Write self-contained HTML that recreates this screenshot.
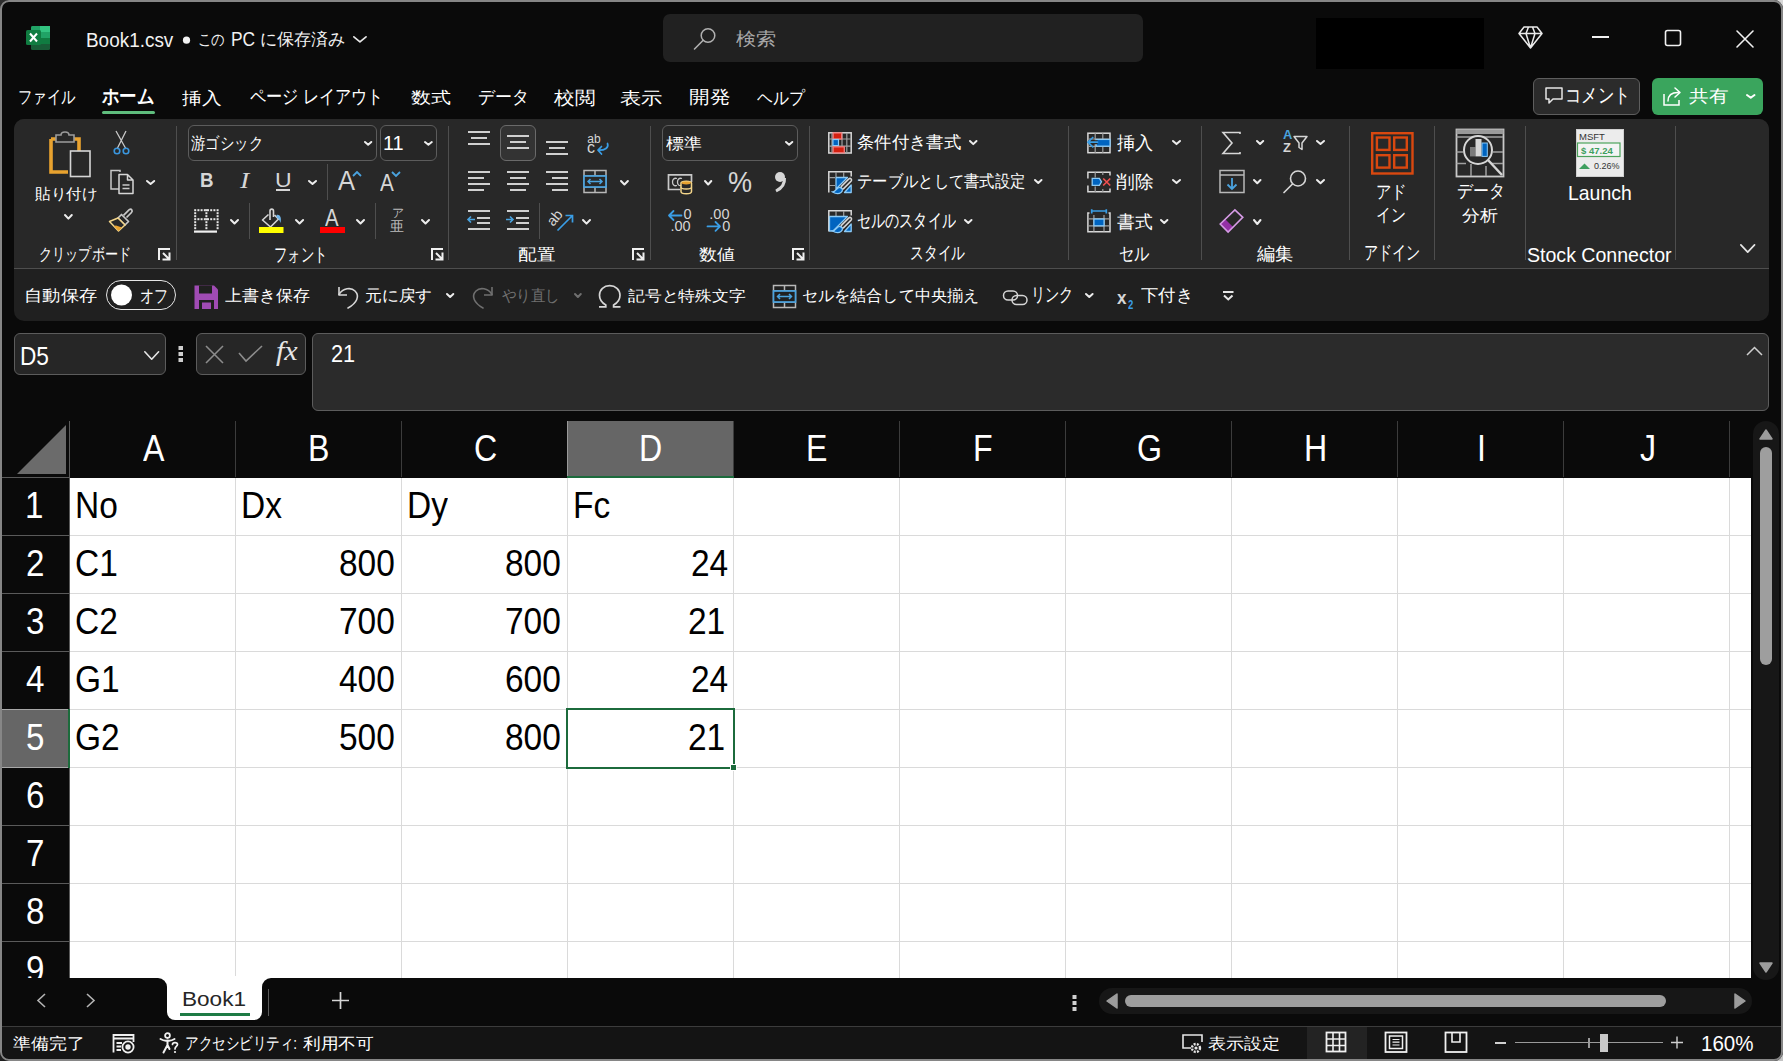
<!DOCTYPE html>
<html><head><meta charset="utf-8">
<style>
*{box-sizing:border-box;margin:0;padding:0}
html,body{width:1783px;height:1061px;overflow:hidden;background:#0a0a0a}
body{font-family:"Liberation Sans",sans-serif;color:#fff;position:relative}
.a{position:absolute}
.t{position:absolute;white-space:nowrap;line-height:1;transform-origin:0 0}
svg{position:absolute;overflow:visible}
</style></head><body>
<div class="a" style="left:0px;top:0px;width:12px;height:12px;background:#2e2e2e;"></div>
<div class="a" style="left:1771px;top:0px;width:12px;height:12px;background:#d8d8d8;"></div>
<div class="a" style="left:0px;top:1049px;width:12px;height:12px;background:#1e1e1e;"></div>
<div class="a" style="left:1771px;top:1049px;width:12px;height:12px;background:#c4c4c4;"></div>
<div class="a" style="left:0px;top:0px;width:1783px;height:1061px;background:#0a0a0a;border-radius:9px;"></div>
<svg style="left:26px;top:25px" width="25" height="26" viewBox="0 0 25 26"><rect x="5" y="1" width="19" height="24" rx="1.5" fill="#185c37"/><rect x="5" y="1" width="19" height="6" rx="1.5" fill="#21a366"/><rect x="14" y="1" width="10" height="6" fill="#33c481"/><rect x="5" y="7" width="19" height="6" fill="#21a366"/><rect x="5" y="13" width="19" height="6" fill="#107c41"/><rect x="0" y="5" width="15" height="15" rx="1.5" fill="#107c41"/><path d="M4 8.5 L11 16.5 M11 8.5 L4 16.5" stroke="#fff" stroke-width="2"/></svg>
<svg style="left:350.6px;top:33.5px" width="17.899999999999977" height="10.799999999999997"><polyline points="2.85,2.85 8.949999999999989,7.9499999999999975 15.049999999999978,2.85" fill="none" stroke="#e8e8e8" stroke-width="1.7" stroke-linecap="round" stroke-linejoin="round"/></svg>
<svg style="left:182px;top:36px" width="9" height="9" viewBox="0 0 9 9"><circle cx="4.5" cy="4.2" r="3.6" fill="#f2f2f2"/></svg>
<div class="a" style="left:663px;top:14px;width:480px;height:48px;background:#212121;border-radius:7px;"></div>
<svg style="left:693px;top:27px" width="25" height="23" viewBox="0 0 25 23"><circle cx="15" cy="8.5" r="6.8" fill="none" stroke="#b0b0b0" stroke-width="1.5"/><line x1="10.2" y1="13.3" x2="1.5" y2="22" stroke="#b0b0b0" stroke-width="1.6" stroke-linecap="round"/></svg>
<div class="a" style="left:1316px;top:18px;width:168px;height:51px;background:#000;"></div>
<svg style="left:1517px;top:25px" width="27" height="25" viewBox="0 0 27 25"><path d="M7 2 H20 L25 8.5 L13.5 23 L2 8.5 Z M2 8.5 H25 M13.5 23 L9 8.5 L11.5 2 M13.5 23 L18 8.5 L15.5 2" fill="none" stroke="#eaeaea" stroke-width="1.5" stroke-linejoin="round"/></svg>
<div class="a" style="left:1592px;top:36px;width:17px;height:2px;background:#f0f0f0;"></div>
<svg style="left:1664px;top:29px" width="18" height="18" viewBox="0 0 18 18"><rect x="1.5" y="1.5" width="15" height="15" rx="2" fill="none" stroke="#f0f0f0" stroke-width="1.6"/></svg>
<svg style="left:1735px;top:29px" width="20" height="20" viewBox="0 0 20 20"><path d="M2 2 L18 18 M18 2 L2 18" stroke="#f0f0f0" stroke-width="1.6" stroke-linecap="round"/></svg>
<div class="a" style="left:102px;top:111px;width:53px;height:3px;background:#5fbd7d;border-radius:2px;"></div>
<div class="a" style="left:1533px;top:78px;width:107px;height:37px;background:#2b2b2b;border:1px solid #5e5e5e;border-radius:6px;"></div>
<svg style="left:1544px;top:86px" width="20" height="20" viewBox="0 0 20 20"><path d="M2 2 H18 V13 H9 L5 17 V13 H2 Z" fill="none" stroke="#e6e6e6" stroke-width="1.5" stroke-linejoin="round"/></svg>
<div class="a" style="left:1652px;top:78px;width:111px;height:37px;background:#3aa55d;border-radius:6px;"></div>
<svg style="left:1662px;top:86px" width="22" height="21" viewBox="0 0 22 21"><path d="M2 8 V19 H17 V14" fill="none" stroke="#fff" stroke-width="1.5"/><path d="M6 15 C6 9 10 6.5 16 6.5 M13 2 L18 6.5 L13 11" fill="none" stroke="#fff" stroke-width="1.5" stroke-linejoin="round" stroke-linecap="round"/></svg>
<svg style="left:1743.5px;top:92.2px" width="13.5" height="8.799999999999997"><polyline points="3.0,3.0 6.75,5.799999999999997 10.5,3.0" fill="none" stroke="#fff" stroke-width="2.0" stroke-linecap="round" stroke-linejoin="round"/></svg>
<div class="a" style="left:14px;top:119px;width:1755px;height:202px;border-radius:10px;background:#202020;overflow:hidden"><div class="a" style="left:0;top:0;width:1755px;height:149px;background:#282828"></div><div class="a" style="left:0;top:149px;width:1755px;height:1px;background:#4e4e4e"></div></div>
<div class="a" style="left:176px;top:126px;width:1px;height:134px;background:#4e4e4e;"></div>
<div class="a" style="left:448px;top:126px;width:1px;height:134px;background:#4e4e4e;"></div>
<div class="a" style="left:650px;top:126px;width:1px;height:134px;background:#4e4e4e;"></div>
<div class="a" style="left:809px;top:126px;width:1px;height:134px;background:#4e4e4e;"></div>
<div class="a" style="left:1068px;top:126px;width:1px;height:134px;background:#4e4e4e;"></div>
<div class="a" style="left:1201px;top:126px;width:1px;height:134px;background:#4e4e4e;"></div>
<div class="a" style="left:1349px;top:126px;width:1px;height:134px;background:#4e4e4e;"></div>
<div class="a" style="left:1434px;top:126px;width:1px;height:134px;background:#4e4e4e;"></div>
<div class="a" style="left:1525px;top:126px;width:1px;height:134px;background:#4e4e4e;"></div>
<div class="a" style="left:1675px;top:126px;width:1px;height:134px;background:#4e4e4e;"></div>
<div class="a" style="left:327px;top:164px;width:1px;height:36px;background:#4e4e4e;"></div>
<div class="a" style="left:249px;top:203px;width:1px;height:36px;background:#4e4e4e;"></div>
<div class="a" style="left:375px;top:203px;width:1px;height:36px;background:#4e4e4e;"></div>
<div class="a" style="left:539px;top:203px;width:1px;height:36px;background:#4e4e4e;"></div>
<svg style="left:157px;top:247px" width="15" height="15" viewBox="0 0 15 15"><path d="M2 13 V2 H13" fill="none" stroke="#f0f0f0" stroke-width="2"/><path d="M6 6 L12 12 M12.5 5.5 V12.5 H5.5" fill="none" stroke="#f0f0f0" stroke-width="2"/></svg>
<svg style="left:430px;top:247px" width="15" height="15" viewBox="0 0 15 15"><path d="M2 13 V2 H13" fill="none" stroke="#f0f0f0" stroke-width="2"/><path d="M6 6 L12 12 M12.5 5.5 V12.5 H5.5" fill="none" stroke="#f0f0f0" stroke-width="2"/></svg>
<svg style="left:631px;top:247px" width="15" height="15" viewBox="0 0 15 15"><path d="M2 13 V2 H13" fill="none" stroke="#f0f0f0" stroke-width="2"/><path d="M6 6 L12 12 M12.5 5.5 V12.5 H5.5" fill="none" stroke="#f0f0f0" stroke-width="2"/></svg>
<svg style="left:791px;top:247px" width="15" height="15" viewBox="0 0 15 15"><path d="M2 13 V2 H13" fill="none" stroke="#f0f0f0" stroke-width="2"/><path d="M6 6 L12 12 M12.5 5.5 V12.5 H5.5" fill="none" stroke="#f0f0f0" stroke-width="2"/></svg>
<svg style="left:46px;top:130px" width="48" height="50" viewBox="0 0 48 50"><path d="M5 9 H10 M26 9 H33 V22 M5 9 V42 H22" fill="none" stroke="#e8a22f" stroke-width="3.6"/><path d="M10 12 V5 H15 C15 1 23 1 23 5 H28 V12 Z" fill="#282828" stroke="#9c9c9c" stroke-width="1.6"/><rect x="24.5" y="21" width="19.5" height="25.5" fill="#282828" stroke="#d6d6d6" stroke-width="1.6"/></svg>
<svg style="left:61.8px;top:212px" width="12.799999999999997" height="9.599999999999994"><polyline points="3.0,3.0 6.399999999999999,6.599999999999994 9.799999999999997,3.0" fill="none" stroke="#ededed" stroke-width="2.0" stroke-linecap="round" stroke-linejoin="round"/></svg>
<svg style="left:112px;top:130px" width="20" height="26" viewBox="0 0 20 26"><path d="M4 1 L14 19 M14 1 L5 19" stroke="#c8c8c8" stroke-width="1.3" fill="none"/><circle cx="5" cy="21" r="2.8" fill="none" stroke="#3a96dd" stroke-width="1.6"/><circle cx="14" cy="21" r="2.8" fill="none" stroke="#3a96dd" stroke-width="1.6"/></svg>
<svg style="left:108px;top:169px" width="28" height="27" viewBox="0 0 28 27"><path d="M12 3 V1.5 H3 V20 H11" fill="none" stroke="#c8c8c8" stroke-width="1.5"/><path d="M11 5.5 H19.5 L25 11 V24.5 H11 Z M19.5 5.5 V11 H25" fill="#282828" stroke="#d6d6d6" stroke-width="1.5" stroke-linejoin="round"/><path d="M14.5 16 H21.5 M14.5 19.5 H21.5" stroke="#c8c8c8" stroke-width="1.3"/></svg>
<svg style="left:143.8px;top:178px" width="13.199999999999989" height="9"><polyline points="3.0,3.0 6.599999999999994,6.0 10.199999999999989,3.0" fill="none" stroke="#ededed" stroke-width="2.0" stroke-linecap="round" stroke-linejoin="round"/></svg>
<svg style="left:108px;top:207px" width="28" height="27" viewBox="0 0 28 27"><path d="M18.5 10.5 L23.5 5.5 C25 4 23.5 1.5 21.5 2.5 C21 2.8 20.8 3 20.5 3.3 L15.5 8.3" fill="none" stroke="#c8c8c8" stroke-width="1.7" stroke-linejoin="round"/><path d="M13.5 7.5 L20.5 14.5 L17 18 L10 11 Z" fill="#282828" stroke="#c8c8c8" stroke-width="1.7" stroke-linejoin="round"/><path d="M10 11 L1.5 14.5 L10.5 24 L17 18 Z" fill="#282828" stroke="#f3d58a" stroke-width="1.5" stroke-linejoin="round"/><path d="M6 19 L10.5 24 L14 20.5 L8 18.5 Z" fill="#e8a22f"/></svg>
<div class="a" style="left:188px;top:125px;width:189px;height:36px;background:#262626;border:1px solid #5c5c5c;border-radius:6px;"></div>
<div class="a" style="left:380px;top:125px;width:57px;height:36px;background:#262626;border:1px solid #5c5c5c;border-radius:6px;"></div>
<svg style="left:362px;top:139px" width="12.300000000000011" height="8.699999999999989"><polyline points="3.0,3.0 6.150000000000006,5.699999999999989 9.300000000000011,3.0" fill="none" stroke="#ededed" stroke-width="2.0" stroke-linecap="round" stroke-linejoin="round"/></svg>
<svg style="left:421.8px;top:139px" width="12.800000000000011" height="8.699999999999989"><polyline points="3.0,3.0 6.400000000000006,5.699999999999989 9.800000000000011,3.0" fill="none" stroke="#ededed" stroke-width="2.0" stroke-linecap="round" stroke-linejoin="round"/></svg>
<div class="a" style="left:276px;top:189px;width:14px;height:2px;background:#d6d6d6;"></div>
<svg style="left:306px;top:178px" width="13" height="9"><polyline points="3.0,3.0 6.5,6.0 10.0,3.0" fill="none" stroke="#ededed" stroke-width="2.0" stroke-linecap="round" stroke-linejoin="round"/></svg>
<svg style="left:351px;top:169px" width="12" height="9" viewBox="0 0 12 9"><polyline points="2,7 6,3 10,7" fill="none" stroke="#4aa3df" stroke-width="1.8"/></svg>
<svg style="left:390px;top:169px" width="12" height="9" viewBox="0 0 12 9"><polyline points="2,3 6,7 10,3" fill="none" stroke="#4aa3df" stroke-width="1.8"/></svg>
<svg style="left:192px;top:207px" width="27" height="28" viewBox="0 0 27 28"><rect x="2.2" y="2.2" width="2" height="2" fill="#e6e6e6"/><rect x="2.2" y="5.2" width="2" height="2" fill="#e6e6e6"/><rect x="2.2" y="8.2" width="2" height="2" fill="#e6e6e6"/><rect x="2.2" y="11.2" width="2" height="2" fill="#e6e6e6"/><rect x="2.2" y="14.2" width="2" height="2" fill="#e6e6e6"/><rect x="2.2" y="17.2" width="2" height="2" fill="#e6e6e6"/><rect x="2.2" y="20.2" width="2" height="2" fill="#e6e6e6"/><rect x="5.4" y="2.2" width="2" height="2" fill="#e6e6e6"/><rect x="5.4" y="11.2" width="2" height="2" fill="#e6e6e6"/><rect x="8.6" y="2.2" width="2" height="2" fill="#e6e6e6"/><rect x="8.6" y="11.2" width="2" height="2" fill="#e6e6e6"/><rect x="11.8" y="2.2" width="2" height="2" fill="#e6e6e6"/><rect x="11.8" y="11.2" width="2" height="2" fill="#e6e6e6"/><rect x="13.4" y="2.2" width="2" height="2" fill="#e6e6e6"/><rect x="13.4" y="5.2" width="2" height="2" fill="#e6e6e6"/><rect x="13.4" y="8.2" width="2" height="2" fill="#e6e6e6"/><rect x="13.4" y="11.2" width="2" height="2" fill="#e6e6e6"/><rect x="13.4" y="14.2" width="2" height="2" fill="#e6e6e6"/><rect x="13.4" y="17.2" width="2" height="2" fill="#e6e6e6"/><rect x="13.4" y="20.2" width="2" height="2" fill="#e6e6e6"/><rect x="15.0" y="2.2" width="2" height="2" fill="#e6e6e6"/><rect x="15.0" y="11.2" width="2" height="2" fill="#e6e6e6"/><rect x="18.2" y="2.2" width="2" height="2" fill="#e6e6e6"/><rect x="18.2" y="11.2" width="2" height="2" fill="#e6e6e6"/><rect x="21.4" y="2.2" width="2" height="2" fill="#e6e6e6"/><rect x="21.4" y="11.2" width="2" height="2" fill="#e6e6e6"/><rect x="24.6" y="2.2" width="2" height="2" fill="#e6e6e6"/><rect x="24.6" y="5.2" width="2" height="2" fill="#e6e6e6"/><rect x="24.6" y="8.2" width="2" height="2" fill="#e6e6e6"/><rect x="24.6" y="11.2" width="2" height="2" fill="#e6e6e6"/><rect x="24.6" y="14.2" width="2" height="2" fill="#e6e6e6"/><rect x="24.6" y="17.2" width="2" height="2" fill="#e6e6e6"/><rect x="24.6" y="20.2" width="2" height="2" fill="#e6e6e6"/><rect x="2" y="23.5" width="23" height="2.2" fill="#f0f0f0"/></svg>
<svg style="left:228px;top:217px" width="13" height="9.5"><polyline points="3.0,3.0 6.5,6.5 10.0,3.0" fill="none" stroke="#ededed" stroke-width="2.0" stroke-linecap="round" stroke-linejoin="round"/></svg>
<svg style="left:259px;top:207px" width="28" height="27" viewBox="0 0 28 27"><path d="M9.5 7.5 L3.5 13 L11.5 20 L19.5 12 L15.5 8" fill="none" stroke="#d6d6d6" stroke-width="1.6" stroke-linejoin="round"/><path d="M11 13 V4 C11 1.5 14.5 1.5 14.5 4 V10" fill="none" stroke="#d6d6d6" stroke-width="1.6"/><path d="M17.5 8 C20.5 7 23 10 21.5 16 C20.5 13 19.5 11.5 17.5 10.5 Z" fill="#6fb5ea"/><rect x="0" y="20" width="24.5" height="6" fill="#ffff00"/></svg>
<svg style="left:292.8px;top:217px" width="13.099999999999966" height="9.5"><polyline points="3.0,3.0 6.549999999999983,6.5 10.099999999999966,3.0" fill="none" stroke="#ededed" stroke-width="2.0" stroke-linecap="round" stroke-linejoin="round"/></svg>
<div class="a" style="left:320px;top:227px;width:24.5px;height:6px;background:#ff0000;"></div>
<svg style="left:353.7px;top:217px" width="13.0" height="9.5"><polyline points="3.0,3.0 6.5,6.5 10.0,3.0" fill="none" stroke="#ededed" stroke-width="2.0" stroke-linecap="round" stroke-linejoin="round"/></svg>
<div class="t" style="left:392px;top:207px;font-size:12px;color:#bdbdbd;">ア</div>
<div class="t" style="left:390px;top:219px;font-size:14px;color:#bdbdbd;">亜</div>
<svg style="left:418.8px;top:217px" width="13.0" height="9.5"><polyline points="3.0,3.0 6.5,6.5 10.0,3.0" fill="none" stroke="#ededed" stroke-width="2.0" stroke-linecap="round" stroke-linejoin="round"/></svg>
<div class="a" style="left:500px;top:125px;width:36px;height:36px;background:#333333;border:1px solid #6a6a6a;border-radius:6px;"></div>
<svg style="left:468px;top:0px" width="40" height="300" viewBox="0 0 40 300"><rect x="0" y="131" width="22" height="2" fill="#d0d0d0"/><rect x="3" y="137" width="16" height="2" fill="#d0d0d0"/><rect x="0" y="143" width="22" height="2" fill="#d0d0d0"/></svg>
<svg style="left:507px;top:0px" width="40" height="300" viewBox="0 0 40 300"><rect x="0" y="135" width="22" height="2" fill="#d0d0d0"/><rect x="3" y="141" width="16" height="2" fill="#d0d0d0"/><rect x="0" y="147" width="22" height="2" fill="#d0d0d0"/></svg>
<svg style="left:546px;top:0px" width="40" height="300" viewBox="0 0 40 300"><rect x="0" y="141" width="22" height="2" fill="#d0d0d0"/><rect x="3" y="147" width="16" height="2" fill="#d0d0d0"/><rect x="0" y="153" width="22" height="2" fill="#d0d0d0"/></svg>
<svg style="left:468px;top:0px" width="40" height="300" viewBox="0 0 40 300"><rect x="0" y="171" width="22" height="2" fill="#d0d0d0"/><rect x="0" y="177" width="16" height="2" fill="#d0d0d0"/><rect x="0" y="183" width="22" height="2" fill="#d0d0d0"/><rect x="0" y="189" width="16" height="2" fill="#d0d0d0"/></svg>
<svg style="left:507px;top:0px" width="40" height="300" viewBox="0 0 40 300"><rect x="0" y="171" width="22" height="2" fill="#d0d0d0"/><rect x="3" y="177" width="16" height="2" fill="#d0d0d0"/><rect x="0" y="183" width="22" height="2" fill="#d0d0d0"/><rect x="3" y="189" width="16" height="2" fill="#d0d0d0"/></svg>
<svg style="left:546px;top:0px" width="40" height="300" viewBox="0 0 40 300"><rect x="0" y="171" width="22" height="2" fill="#d0d0d0"/><rect x="6" y="177" width="16" height="2" fill="#d0d0d0"/><rect x="0" y="183" width="22" height="2" fill="#d0d0d0"/><rect x="6" y="189" width="16" height="2" fill="#d0d0d0"/></svg>
<div class="t" style="left:587.3px;top:132.8px;font-size:12px;color:#d6d6d6;">ab</div>
<div class="t" style="left:587px;top:139.9px;font-size:16px;color:#d6d6d6;">c</div>
<svg style="left:595px;top:141px" width="16" height="16" viewBox="0 0 16 16"><path d="M12.5 2.5 C14 6.5 10 9.5 3.5 9.2 M6.5 5.5 L3 9.2 L6.5 13" fill="none" stroke="#3a9ee6" stroke-width="1.7" stroke-linejoin="round" stroke-linecap="round"/></svg>
<svg style="left:582px;top:169px" width="27" height="26" viewBox="0 0 27 26"><rect x="2" y="1.5" width="22" height="22" fill="none" stroke="#b8b8b8" stroke-width="1.5"/><path d="M2 7 H24 M2 18 H24 M13 1.5 V7 M13 18 V23.5" stroke="#b8b8b8" stroke-width="1.5"/><rect x="2" y="7" width="22" height="11" fill="#282828" stroke="#4aa3df" stroke-width="1.7"/><path d="M6 12.5 H20 M8.5 10 L6 12.5 L8.5 15 M17.5 10 L20 12.5 L17.5 15" fill="none" stroke="#4aa3df" stroke-width="1.5"/></svg>
<svg style="left:617.5px;top:177.5px" width="12.899999999999977" height="9.5"><polyline points="3.0,3.0 6.449999999999989,6.5 9.899999999999977,3.0" fill="none" stroke="#ededed" stroke-width="2.0" stroke-linecap="round" stroke-linejoin="round"/></svg>
<svg style="left:468px;top:0px" width="40" height="300" viewBox="0 0 40 300"><rect x="0" y="210" width="22" height="2" fill="#d0d0d0"/><rect x="9" y="217" width="13" height="2" fill="#d0d0d0"/><rect x="9" y="222" width="13" height="2" fill="#d0d0d0"/><rect x="0" y="228" width="22" height="2" fill="#d0d0d0"/></svg>
<svg style="left:507px;top:0px" width="40" height="300" viewBox="0 0 40 300"><rect x="0" y="210" width="22" height="2" fill="#d0d0d0"/><rect x="9" y="217" width="13" height="2" fill="#d0d0d0"/><rect x="9" y="222" width="13" height="2" fill="#d0d0d0"/><rect x="0" y="228" width="22" height="2" fill="#d0d0d0"/></svg>
<svg style="left:466px;top:211px" width="12" height="14" viewBox="0 0 12 14"><path d="M9 8.5 H2 M5 5.5 L2 8.5 L5 11.5" fill="none" stroke="#4aa3df" stroke-width="1.6"/></svg>
<svg style="left:505px;top:211px" width="12" height="14" viewBox="0 0 12 14"><path d="M1 8.5 H8 M5 5.5 L8 8.5 L5 11.5" fill="none" stroke="#4aa3df" stroke-width="1.6"/></svg>
<div class="t" style="left:548px;top:210px;font-size:14.5px;color:#d6d6d6;transform:rotate(-50deg);transform-origin:8px 9px;">ab</div>
<svg style="left:555px;top:212px" width="20" height="21" viewBox="0 0 20 21"><path d="M2.5 18.5 L17 4 M10.5 3.5 H17.5 V10.5" fill="none" stroke="#3a9ee6" stroke-width="1.7"/></svg>
<svg style="left:579.8px;top:216.8px" width="13.0" height="9.599999999999994"><polyline points="3.0,3.0 6.5,6.599999999999994 10.0,3.0" fill="none" stroke="#ededed" stroke-width="2.0" stroke-linecap="round" stroke-linejoin="round"/></svg>
<div class="a" style="left:662px;top:125px;width:136px;height:36px;background:#262626;border:1px solid #5c5c5c;border-radius:6px;"></div>
<svg style="left:783px;top:139px" width="12.299999999999955" height="8.699999999999989"><polyline points="3.0,3.0 6.149999999999977,5.699999999999989 9.299999999999955,3.0" fill="none" stroke="#ededed" stroke-width="2.0" stroke-linecap="round" stroke-linejoin="round"/></svg>
<svg style="left:666px;top:172px" width="28" height="24" viewBox="0 0 28 24"><path d="M14 17.5 H2.5 V2.8 H25.5 V10" fill="none" stroke="#c8c8c8" stroke-width="1.7"/><path d="M11 6.5 C8 5.5 6.5 7.5 6.5 10 C6.5 12.5 8 14.5 11 13.5 M16 6.5 C13 5.5 11.5 7.5 11.5 10 C11.5 12.5 13 14 15 13.5" fill="none" stroke="#c8c8c8" stroke-width="1.3"/><path d="M15 11 C15 8.5 25.5 8.5 25.5 11 V19.5 C25.5 22.5 15 22.5 15 19.5 Z" fill="#282828" stroke="#f3d58a" stroke-width="1.5"/><ellipse cx="20.25" cy="11" rx="4.6" ry="1.4" fill="#e8a22f"/><path d="M15 15.3 C15 17.5 25.5 17.5 25.5 15.3" fill="none" stroke="#f3d58a" stroke-width="1.4"/></svg>
<svg style="left:702.3px;top:177.5px" width="12.300000000000068" height="9.5"><polyline points="3.0,3.0 6.150000000000034,6.5 9.300000000000068,3.0" fill="none" stroke="#ededed" stroke-width="2.0" stroke-linecap="round" stroke-linejoin="round"/></svg>
<svg style="left:772px;top:171px" width="16" height="22" viewBox="0 0 16 22"><circle cx="8" cy="6" r="5" fill="#d6d6d6"/><path d="M12.5 7 C13 13 10 17 4 20" fill="none" stroke="#d6d6d6" stroke-width="3"/></svg>
<div class="t" style="left:683.4px;top:207.1px;font-size:14.5px;color:#d6d6d6;">0</div>
<div class="t" style="left:670.5px;top:219.1px;font-size:14.5px;color:#d6d6d6;">.00</div>
<svg style="left:666px;top:209px" width="18" height="14" viewBox="0 0 18 14"><path d="M15.5 6.5 H3 M7.5 2 L3 6.5 L7.5 11" fill="none" stroke="#3a9ee6" stroke-width="1.8" stroke-linecap="round" stroke-linejoin="round"/></svg>
<div class="t" style="left:709.3px;top:207.1px;font-size:14.5px;color:#d6d6d6;">.00</div>
<div class="t" style="left:722.2px;top:219.1px;font-size:14.5px;color:#d6d6d6;">0</div>
<svg style="left:705px;top:220px" width="18" height="14" viewBox="0 0 18 14"><path d="M2.5 6.4 H15 M10.5 2 L15 6.4 L10.5 10.8" fill="none" stroke="#3a9ee6" stroke-width="1.8" stroke-linecap="round" stroke-linejoin="round"/></svg>
<svg style="left:825px;top:128px" width="30" height="30" viewBox="0 0 30 30"><rect x="3.8" y="4.8" width="22.4" height="20.2" fill="none" stroke="#d8d8d8" stroke-width="1.5"/><path d="M7 5 V25 M17 5 V25 M21.8 5 V25 M4 11 H26 M4 18.1 H26" stroke="#a0a0a0" stroke-width="1.2"/><rect x="8.1" y="4.9" width="8.6" height="6.1" fill="#d42010" stroke="#f08080" stroke-width="1.3"/><rect x="7.9" y="11.5" width="5.6" height="6.1" fill="#0064c0" stroke="#8ccaf5" stroke-width="1.2"/><rect x="8.1" y="18.8" width="11.2" height="6" fill="#d42010" stroke="#f08080" stroke-width="1.3"/></svg>
<svg style="left:967px;top:137.7px" width="12.5" height="9.100000000000023"><polyline points="3.0,3.0 6.25,6.100000000000023 9.5,3.0" fill="none" stroke="#ededed" stroke-width="2.0" stroke-linecap="round" stroke-linejoin="round"/></svg>
<svg style="left:825px;top:167px" width="30" height="30" viewBox="0 0 30 30"><path d="M3.8 25.5 V4.8 H26.2 V9.5" fill="none" stroke="#d8d8d8" stroke-width="1.5"/><path d="M11 5 V10 M18.7 5 V10 M4 10.7 H10 M4 18.5 H10" stroke="#a0a0a0" stroke-width="1.2"/><path d="M11 10.5 H22.5 L11 22 Z" fill="#0064c0" stroke="#8ccaf5" stroke-width="1.3" stroke-linejoin="round"/><path d="M26.2 18 V25.5 H19.5 Z" fill="#0064c0" stroke="#8ccaf5" stroke-width="1.3" stroke-linejoin="round"/><path d="M25 13 L17.5 20.5" stroke="#d6d6d6" stroke-width="4.6" stroke-linecap="round"/><path d="M25 13 L17.5 20.5" stroke="#282828" stroke-width="1.6" stroke-linecap="round"/><path d="M7.5 25 C11 24.5 12 20 15 20.5 C17.5 21 18.5 23.5 16 25.5 C13.5 27.5 10 26.5 7.5 25 Z" fill="#0064c0" stroke="#8ccaf5" stroke-width="1.3"/></svg>
<svg style="left:1031.5px;top:177px" width="12.5" height="9"><polyline points="3.0,3.0 6.25,6.0 9.5,3.0" fill="none" stroke="#ededed" stroke-width="2.0" stroke-linecap="round" stroke-linejoin="round"/></svg>
<svg style="left:825px;top:206px" width="30" height="30" viewBox="0 0 30 30"><path d="M3.8 25.5 V4.8 H26.2 V9.5" fill="none" stroke="#d8d8d8" stroke-width="1.5"/><path d="M11 5 V10 M18.7 5 V10 " stroke="#a0a0a0" stroke-width="1.2"/><path d="M4.5 10.5 H22.5 L8 25 H4.5 Z" fill="#0064c0" stroke="#8ccaf5" stroke-width="1.3" stroke-linejoin="round"/><path d="M26.2 18 V25.5 H19.5 Z" fill="#0064c0" stroke="#8ccaf5" stroke-width="1.3" stroke-linejoin="round"/><path d="M25 13 L17.5 20.5" stroke="#d6d6d6" stroke-width="4.6" stroke-linecap="round"/><path d="M25 13 L17.5 20.5" stroke="#282828" stroke-width="1.6" stroke-linecap="round"/><path d="M7.5 25 C11 24.5 12 20 15 20.5 C17.5 21 18.5 23.5 16 25.5 C13.5 27.5 10 26.5 7.5 25 Z" fill="#0064c0" stroke="#8ccaf5" stroke-width="1.3"/></svg>
<svg style="left:961.8px;top:216.5px" width="12.5" height="9.0"><polyline points="3.0,3.0 6.25,6.0 9.5,3.0" fill="none" stroke="#ededed" stroke-width="2.0" stroke-linecap="round" stroke-linejoin="round"/></svg>
<svg style="left:1083px;top:128px" width="30" height="30" viewBox="0 0 30 30"><rect x="4.9" y="5.2" width="22.1" height="19.5" fill="none" stroke="#d8d8d8" stroke-width="1.5"/><path d="M12.2 5 V25 M19.8 5 V25 M5 11 H27 M5 18.4 H27" stroke="#a0a0a0" stroke-width="1.2"/><rect x="13.1" y="11.4" width="14" height="6.8" fill="#0064c0" stroke="#8ccaf5" stroke-width="1.3"/><path d="M14.5 14.2 H5.5" stroke="#282828" stroke-width="4"/><path d="M14.5 14.2 H5 M9.8 9.5 L5 14.2 L9.8 19" fill="none" stroke="#3a9ee6" stroke-width="1.7" stroke-linecap="round" stroke-linejoin="round"/></svg>
<svg style="left:1169.5px;top:137.7px" width="13.0" height="9.100000000000023"><polyline points="3.0,3.0 6.5,6.100000000000023 10.0,3.0" fill="none" stroke="#ededed" stroke-width="2.0" stroke-linecap="round" stroke-linejoin="round"/></svg>
<svg style="left:1083px;top:167px" width="30" height="30" viewBox="0 0 30 30"><path d="M4.9 11.5 V5.2 H27 V8.5 M4.9 18.5 V24.7 H27 V21.5" fill="none" stroke="#d8d8d8" stroke-width="1.5"/><path d="M12.2 5 V10.5 M19.8 5 V8 M12.2 19.5 V25 M19.8 22 V25" stroke="#a0a0a0" stroke-width="1.2"/><path d="M9.2 11.4 H16.4 L18.5 14.8 L16.4 18.4 H9.2 Z" fill="#0064c0" stroke="#8ccaf5" stroke-width="1.3"/><path d="M20.2 11.5 L27.2 18.5 M27.2 11.5 L20.2 18.5" stroke="#f05050" stroke-width="1.7"/></svg>
<svg style="left:1169.5px;top:177px" width="13.0" height="9"><polyline points="3.0,3.0 6.5,6.0 10.0,3.0" fill="none" stroke="#ededed" stroke-width="2.0" stroke-linecap="round" stroke-linejoin="round"/></svg>
<svg style="left:1083px;top:205px" width="30" height="30" viewBox="0 0 30 30"><path d="M6.5 8.1 H4.9 V26.7 H27 V8.1 H25.5" fill="none" stroke="#d8d8d8" stroke-width="1.5"/><path d="M10.9 10 V26.5 M21 10 V26.5 M5 13.9 H27 M5 20.9 H27" stroke="#a0a0a0" stroke-width="1.2"/><rect x="10.9" y="14" width="10.2" height="6.8" fill="#0064c0" stroke="#8ccaf5" stroke-width="1.3"/><path d="M8.7 6 H23.3 M8.7 4.2 V8.5 M23.3 4.2 V8.5" stroke="#3a9ee6" stroke-width="1.7"/></svg>
<svg style="left:1158px;top:216.5px" width="12.400000000000091" height="9.0"><polyline points="3.0,3.0 6.2000000000000455,6.0 9.400000000000091,3.0" fill="none" stroke="#ededed" stroke-width="2.0" stroke-linecap="round" stroke-linejoin="round"/></svg>
<svg style="left:1221px;top:131px" width="22" height="24" viewBox="0 0 22 24"><path d="M19 3 V1.5 H2 L11 12 L2 22.5 H19 V21" fill="none" stroke="#d6d6d6" stroke-width="1.6" stroke-linejoin="miter"/></svg>
<svg style="left:1254.2px;top:138.4px" width="12.200000000000045" height="8.900000000000006"><polyline points="3.0,3.0 6.100000000000023,5.900000000000006 9.200000000000045,3.0" fill="none" stroke="#ededed" stroke-width="2.0" stroke-linecap="round" stroke-linejoin="round"/></svg>
<div class="t" style="left:1283px;top:128px;font-size:13px;color:#4aa3df;font-weight:bold;">A</div>
<div class="t" style="left:1283px;top:141px;font-size:13px;color:#d6d6d6;font-weight:bold;">Z</div>
<svg style="left:1293px;top:135px" width="16" height="16" viewBox="0 0 16 16"><path d="M1 1.5 H14 L9 8 V14.5 L6 12.5 V8 Z" fill="none" stroke="#d6d6d6" stroke-width="1.5" stroke-linejoin="round"/></svg>
<svg style="left:1314px;top:138.4px" width="13" height="8.900000000000006"><polyline points="3.0,3.0 6.5,5.900000000000006 10.0,3.0" fill="none" stroke="#ededed" stroke-width="2.0" stroke-linecap="round" stroke-linejoin="round"/></svg>
<svg style="left:1219px;top:169px" width="26" height="25" viewBox="0 0 26 25"><rect x="1" y="1.5" width="24" height="22" fill="none" stroke="#b8b8b8" stroke-width="1.5"/><path d="M1 6 H25" stroke="#b8b8b8" stroke-width="1.5"/><path d="M13 9 V20 M8.5 15.5 L13 20 L17.5 15.5" fill="none" stroke="#4aa3df" stroke-width="1.8"/></svg>
<svg style="left:1251px;top:177.3px" width="12.5" height="9.299999999999983"><polyline points="3.0,3.0 6.25,6.299999999999983 9.5,3.0" fill="none" stroke="#ededed" stroke-width="2.0" stroke-linecap="round" stroke-linejoin="round"/></svg>
<svg style="left:1282px;top:169px" width="26" height="26" viewBox="0 0 26 26"><circle cx="16" cy="9.5" r="7.5" fill="none" stroke="#d6d6d6" stroke-width="1.6"/><path d="M10.5 15 L2 23.5" stroke="#d6d6d6" stroke-width="1.7" stroke-linecap="round"/></svg>
<svg style="left:1314px;top:177.3px" width="13" height="9.299999999999983"><polyline points="3.0,3.0 6.5,6.299999999999983 10.0,3.0" fill="none" stroke="#ededed" stroke-width="2.0" stroke-linecap="round" stroke-linejoin="round"/></svg>
<svg style="left:1218px;top:207px" width="28" height="28" viewBox="0 0 28 28"><path d="M7.2 12.3 L15.1 20.1 L10.1 25 L2.2 17 Z" fill="#9430a6"/><path d="M2.2 17 L16.9 2.9 L24.8 10.3 L10.1 25 Z" fill="none" stroke="#d69be6" stroke-width="1.6" stroke-linejoin="miter"/></svg>
<svg style="left:1251px;top:216.5px" width="12.5" height="10.0"><polyline points="3.0,3.0 6.25,7.0 9.5,3.0" fill="none" stroke="#ededed" stroke-width="2.0" stroke-linecap="round" stroke-linejoin="round"/></svg>
<svg style="left:1370px;top:131px" width="45" height="45" viewBox="0 0 45 45"><rect x="2.2" y="2.2" width="40.3" height="40.3" fill="none" stroke="#d9480f" stroke-width="2.4"/><rect x="6.9" y="6.5" width="12.6" height="12.4" fill="none" stroke="#d9480f" stroke-width="2.4"/><rect x="24.2" y="6.5" width="12.6" height="12.4" fill="none" stroke="#d9480f" stroke-width="2.4"/><rect x="6.9" y="24.2" width="12.6" height="12.4" fill="none" stroke="#d9480f" stroke-width="2.4"/><rect x="24.2" y="24.2" width="12.6" height="12.4" fill="none" stroke="#d9480f" stroke-width="2.4"/></svg>
<svg style="left:1455px;top:128px" width="50" height="50" viewBox="0 0 50 50"><rect x="1.5" y="1.5" width="47" height="47" fill="none" stroke="#c8c8c8" stroke-width="1.8"/><rect x="1.5" y="1.5" width="47" height="4.5" fill="#9a9a9a"/><path d="M1.5 9 H48 M1.5 24 H8 M38 24 H48 M1.5 35.5 H11 M36 35.5 H48 M16 36 V48 M31 38 V48" stroke="#a0a0a0" stroke-width="1.5"/><circle cx="23" cy="22" r="14" fill="#282828" stroke="#d6d6d6" stroke-width="2"/><path d="M33 32 L47 47" stroke="#d6d6d6" stroke-width="2.5"/><rect x="15" y="19" width="5.5" height="9.4" fill="#7a7a7a"/><rect x="20.5" y="11" width="6" height="17.4" fill="#d6d6d6"/><rect x="27" y="15" width="5.3" height="13.4" fill="#0064c0" stroke="#8ccaf5" stroke-width="1"/></svg>
<svg style="left:1576px;top:129px" width="48" height="48" viewBox="0 0 48 48"><rect x="0.5" y="0.5" width="47" height="47" fill="#ececec" stroke="#d0d0d0"/><text x="3" y="11" font-size="9.5" font-family="Liberation Sans" fill="#333">MSFT</text><rect x="1.5" y="14" width="42.5" height="13.5" fill="#f4f4f4" stroke="#4ca35c" stroke-width="1.2"/><text x="5" y="24.5" font-size="9.5" font-weight="bold" font-family="Liberation Sans" fill="#3f9f5f">$  47.24</text><path d="M3 40 L8.5 34.5 L14 40 Z" fill="#3f9f5f"/><text x="18" y="40" font-size="9" font-family="Liberation Sans" fill="#333">0.26%</text></svg>
<svg style="left:1737.6px;top:242px" width="19.40000000000009" height="12.900000000000006"><polyline points="2.85,2.85 9.700000000000045,10.050000000000006 16.55000000000009,2.85" fill="none" stroke="#e6e6e6" stroke-width="1.7" stroke-linecap="round" stroke-linejoin="round"/></svg>
<div class="a" style="left:106px;top:280px;width:70px;height:30px;background:transparent;border:1.5px solid #e6e6e6;border-radius:15px;"></div>
<svg style="left:110px;top:283px" width="25" height="25" viewBox="0 0 25 25"><circle cx="11.5" cy="12" r="10.5" fill="#fff"/></svg>
<svg style="left:193px;top:284px" width="27" height="27" viewBox="0 0 27 27"><path d="M1.5 1.5 H21 L25 5.5 V25 H1.5 Z" fill="#a04bb4"/><rect x="6" y="1.5" width="13" height="8" fill="#202020"/><rect x="6" y="16" width="15" height="9" fill="#202020"/><rect x="9" y="18.5" width="9" height="6.5" fill="#a04bb4"/></svg>
<svg style="left:335px;top:284px" width="26" height="27" viewBox="0 0 26 27"><path d="M4 3 V11 H12" fill="none" stroke="#d6d6d6" stroke-width="1.6" stroke-linejoin="round"/><path d="M4 10.5 C8 4 16 3 20 7 C25 12 22 19 13 24" fill="none" stroke="#d6d6d6" stroke-width="1.6" stroke-linecap="round"/></svg>
<svg style="left:444.3px;top:291px" width="12.300000000000011" height="9"><polyline points="3.0,3.0 6.150000000000006,6.0 9.300000000000011,3.0" fill="none" stroke="#ededed" stroke-width="2.0" stroke-linecap="round" stroke-linejoin="round"/></svg>
<svg style="left:471px;top:284px" width="26" height="27" viewBox="0 0 26 27"><path d="M21 3 V11 H13" fill="none" stroke="#6f6f6f" stroke-width="1.6" stroke-linejoin="round"/><path d="M21 10.5 C17 4 9 3 5 7 C0 12 3 19 12 24" fill="none" stroke="#6f6f6f" stroke-width="1.6" stroke-linecap="round"/></svg>
<svg style="left:571.5px;top:291px" width="11.799999999999955" height="9"><polyline points="3.0,3.0 5.899999999999977,6.0 8.799999999999955,3.0" fill="none" stroke="#6f6f6f" stroke-width="2.0" stroke-linecap="round" stroke-linejoin="round"/></svg>
<svg style="left:772px;top:284px" width="26" height="26" viewBox="0 0 26 26"><rect x="1.5" y="1.5" width="22" height="22" fill="none" stroke="#b8b8b8" stroke-width="1.5"/><path d="M1.5 7 H23.5 M1.5 18 H23.5 M12.5 1.5 V7 M12.5 18 V23.5" stroke="#b8b8b8" stroke-width="1.5"/><rect x="1.5" y="7" width="22" height="11" fill="#202020" stroke="#4aa3df" stroke-width="1.7"/><path d="M5.5 12.5 H19.5 M8 10 L5.5 12.5 L8 15 M17 10 L19.5 12.5 L17 15" fill="none" stroke="#4aa3df" stroke-width="1.5"/></svg>
<svg style="left:1002px;top:288px" width="28" height="19" viewBox="0 0 28 19"><rect x="1.5" y="3" width="14" height="9" rx="4.5" fill="none" stroke="#d6d6d6" stroke-width="1.5"/><rect x="10" y="7.5" width="15" height="9" rx="4.5" fill="none" stroke="#d6d6d6" stroke-width="1.5"/></svg>
<svg style="left:1083px;top:291px" width="12.599999999999909" height="9"><polyline points="3.0,3.0 6.2999999999999545,6.0 9.599999999999909,3.0" fill="none" stroke="#ededed" stroke-width="2.0" stroke-linecap="round" stroke-linejoin="round"/></svg>
<svg style="left:1221px;top:289px" width="14" height="13" viewBox="0 0 14 13"><path d="M2 3 H12.5" stroke="#e6e6e6" stroke-width="2"/><polyline points="3,6.5 7.25,10.5 11.5,6.5" fill="none" stroke="#e6e6e6" stroke-width="2"/></svg>
<svg style="left:597px;top:284px" width="26" height="26" viewBox="0 0 26 26"><path d="M2 22.8 H8.8 V21 C4.5 18.5 2.5 15 2.5 11.2 C2.5 5.5 7 1.6 12.7 1.6 C18.4 1.6 23 5.5 23 11.2 C23 15 21 18.5 16.6 21 V22.8 H23.5" fill="none" stroke="#d6d6d6" stroke-width="1.7"/></svg>
<div class="a" style="left:14px;top:333px;width:152px;height:42px;background:#262626;border:1px solid #5c5c5c;border-radius:6px;"></div>
<svg style="left:141.6px;top:348.5px" width="19.400000000000006" height="13.0"><polyline points="2.8,2.8 9.700000000000003,10.2 16.600000000000005,2.8" fill="none" stroke="#e6e6e6" stroke-width="1.6" stroke-linecap="round" stroke-linejoin="round"/></svg>
<svg style="left:178px;top:345px" width="7" height="18" viewBox="0 0 7 18"><rect x="0.5" y="1" width="4.5" height="4" fill="#cfcfcf"/><rect x="0.5" y="7" width="4.5" height="4" fill="#cfcfcf"/><rect x="0.5" y="13" width="4.5" height="4" fill="#cfcfcf"/></svg>
<div class="a" style="left:196px;top:333px;width:110px;height:42px;background:#262626;border:1px solid #5c5c5c;border-radius:6px;"></div>
<svg style="left:204px;top:344px" width="22" height="21" viewBox="0 0 22 21"><path d="M2 2 L19 19 M19 2 L2 19" stroke="#8c8c8c" stroke-width="1.6"/></svg>
<svg style="left:237px;top:344px" width="28" height="20" viewBox="0 0 28 20"><polyline points="2,9 9,17 25,2" fill="none" stroke="#8c8c8c" stroke-width="1.6"/></svg>
<div class="a" style="left:312px;top:333px;width:1457px;height:78px;background:#2b2b2b;border:1px solid #5c5c5c;border-radius:6px;"></div>
<svg style="left:1745px;top:345px" width="20" height="13" viewBox="0 0 20 13"><polyline points="2,10 9.5,2.5 17,10" fill="none" stroke="#cfcfcf" stroke-width="1.5"/></svg>
<div class="a" style="left:70px;top:478px;width:1681px;height:500px;background:#ffffff;"></div>
<div class="a" style="left:235px;top:478px;width:1px;height:500px;background:#dadada;"></div>
<div class="a" style="left:401px;top:478px;width:1px;height:500px;background:#dadada;"></div>
<div class="a" style="left:567px;top:478px;width:1px;height:500px;background:#dadada;"></div>
<div class="a" style="left:733px;top:478px;width:1px;height:500px;background:#dadada;"></div>
<div class="a" style="left:899px;top:478px;width:1px;height:500px;background:#dadada;"></div>
<div class="a" style="left:1065px;top:478px;width:1px;height:500px;background:#dadada;"></div>
<div class="a" style="left:1231px;top:478px;width:1px;height:500px;background:#dadada;"></div>
<div class="a" style="left:1397px;top:478px;width:1px;height:500px;background:#dadada;"></div>
<div class="a" style="left:1563px;top:478px;width:1px;height:500px;background:#dadada;"></div>
<div class="a" style="left:1729px;top:478px;width:1px;height:500px;background:#dadada;"></div>
<div class="a" style="left:70px;top:535px;width:1681px;height:1px;background:#dadada;"></div>
<div class="a" style="left:70px;top:593px;width:1681px;height:1px;background:#dadada;"></div>
<div class="a" style="left:70px;top:651px;width:1681px;height:1px;background:#dadada;"></div>
<div class="a" style="left:70px;top:709px;width:1681px;height:1px;background:#dadada;"></div>
<div class="a" style="left:70px;top:767px;width:1681px;height:1px;background:#dadada;"></div>
<div class="a" style="left:70px;top:825px;width:1681px;height:1px;background:#dadada;"></div>
<div class="a" style="left:70px;top:883px;width:1681px;height:1px;background:#dadada;"></div>
<div class="a" style="left:70px;top:941px;width:1681px;height:1px;background:#dadada;"></div>
<div class="a" style="left:69px;top:421px;width:1px;height:56px;background:#3c3c3c;"></div>
<div class="a" style="left:235px;top:421px;width:1px;height:56px;background:#3c3c3c;"></div>
<div class="a" style="left:401px;top:421px;width:1px;height:56px;background:#3c3c3c;"></div>
<div class="a" style="left:567px;top:421px;width:1px;height:56px;background:#3c3c3c;"></div>
<div class="a" style="left:733px;top:421px;width:1px;height:56px;background:#3c3c3c;"></div>
<div class="a" style="left:899px;top:421px;width:1px;height:56px;background:#3c3c3c;"></div>
<div class="a" style="left:1065px;top:421px;width:1px;height:56px;background:#3c3c3c;"></div>
<div class="a" style="left:1231px;top:421px;width:1px;height:56px;background:#3c3c3c;"></div>
<div class="a" style="left:1397px;top:421px;width:1px;height:56px;background:#3c3c3c;"></div>
<div class="a" style="left:1563px;top:421px;width:1px;height:56px;background:#3c3c3c;"></div>
<div class="a" style="left:1729px;top:421px;width:1px;height:56px;background:#3c3c3c;"></div>
<div class="a" style="left:69px;top:421px;width:1px;height:557px;background:#5a5a5a;"></div>
<div class="a" style="left:2px;top:477px;width:68px;height:1px;background:#5a5a5a;"></div>
<div class="a" style="left:2px;top:535px;width:67px;height:1px;background:#5a5a5a;"></div>
<div class="a" style="left:2px;top:593px;width:67px;height:1px;background:#5a5a5a;"></div>
<div class="a" style="left:2px;top:651px;width:67px;height:1px;background:#5a5a5a;"></div>
<div class="a" style="left:2px;top:709px;width:67px;height:1px;background:#5a5a5a;"></div>
<div class="a" style="left:2px;top:767px;width:67px;height:1px;background:#5a5a5a;"></div>
<div class="a" style="left:2px;top:825px;width:67px;height:1px;background:#5a5a5a;"></div>
<div class="a" style="left:2px;top:883px;width:67px;height:1px;background:#5a5a5a;"></div>
<div class="a" style="left:2px;top:941px;width:67px;height:1px;background:#5a5a5a;"></div>
<svg style="left:16px;top:424px" width="51" height="51" viewBox="0 0 51 51"><path d="M1 50 L50 1 V50 Z" fill="#6b6b6b"/></svg>
<div class="a" style="left:567px;top:421px;width:166px;height:56px;background:#666666;border-left:1px solid #9a9a9a;"></div>
<div class="a" style="left:567px;top:476px;width:167px;height:2px;background:#1c6b3c;"></div>
<div class="a" style="left:2px;top:709px;width:67px;height:58px;background:#666666;"></div>
<div class="a" style="left:68px;top:709px;width:2px;height:59px;background:#1c6b3c;"></div>
<div class="a" style="left:2px;top:709px;width:66px;height:1px;background:#a8a8a8;"></div>
<div class="a" style="left:2px;top:767px;width:66px;height:1px;background:#a8a8a8;"></div>
<div class="a" style="left:566px;top:708px;width:169px;height:61px;background:transparent;border:2px solid #1c6b3c;"></div>
<div class="a" style="left:730px;top:764px;width:7px;height:7px;background:#1c6b3c;border:1px solid #fff;"></div>
<div class="t" style="left:142.94px;top:431.0px;font-size:36.5px;color:#fff;transform:scaleX(0.88);">A</div>
<div class="t" style="left:308.06px;top:431.0px;font-size:36.5px;color:#fff;transform:scaleX(0.88);">B</div>
<div class="t" style="left:473.62px;top:431.0px;font-size:36.5px;color:#fff;transform:scaleX(0.88);">C</div>
<div class="t" style="left:639.18px;top:431.0px;font-size:36.5px;color:#fff;transform:scaleX(0.88);">D</div>
<div class="t" style="left:806.06px;top:431.0px;font-size:36.5px;color:#fff;transform:scaleX(0.88);">E</div>
<div class="t" style="left:972.94px;top:431.0px;font-size:36.5px;color:#fff;transform:scaleX(0.88);">F</div>
<div class="t" style="left:1137.18px;top:431.0px;font-size:36.5px;color:#fff;transform:scaleX(0.88);">G</div>
<div class="t" style="left:1303.62px;top:431.0px;font-size:36.5px;color:#fff;transform:scaleX(0.88);">H</div>
<div class="t" style="left:1477.1px;top:431.0px;font-size:36.5px;color:#fff;transform:scaleX(0.88);">I</div>
<div class="t" style="left:1640.02px;top:431.0px;font-size:36.5px;color:#fff;transform:scaleX(0.88);">J</div>
<div class="t" style="left:25.38px;top:488.0px;font-size:36.0px;color:#fff;transform:scaleX(0.92);">1</div>
<div class="t" style="left:25.84px;top:546.0px;font-size:36.0px;color:#fff;transform:scaleX(0.92);">2</div>
<div class="t" style="left:26.3px;top:604.0px;font-size:36.0px;color:#fff;transform:scaleX(0.92);">3</div>
<div class="t" style="left:26.3px;top:662.0px;font-size:36.0px;color:#fff;transform:scaleX(0.92);">4</div>
<div class="t" style="left:26.3px;top:720.0px;font-size:36.0px;color:#fff;transform:scaleX(0.92);">5</div>
<div class="t" style="left:25.84px;top:778.0px;font-size:36.0px;color:#fff;transform:scaleX(0.92);">6</div>
<div class="t" style="left:25.84px;top:836.0px;font-size:36.0px;color:#fff;transform:scaleX(0.92);">7</div>
<div class="t" style="left:26.3px;top:894.0px;font-size:36.0px;color:#fff;transform:scaleX(0.92);">8</div>
<div class="t" style="left:25.84px;top:952.0px;font-size:36.0px;color:#fff;transform:scaleX(0.92);">9</div>
<div class="t" style="left:74.71px;top:487.85px;font-size:36.0px;color:#000;transform:scaleX(0.93);">No</div>
<div class="t" style="left:240.51px;top:487.85px;font-size:36.0px;color:#000;transform:scaleX(0.93);">Dx</div>
<div class="t" style="left:406.51px;top:487.85px;font-size:36.0px;color:#000;transform:scaleX(0.93);">Dy</div>
<div class="t" style="left:572.51px;top:487.85px;font-size:36.0px;color:#000;transform:scaleX(0.93);">Fc</div>
<div class="t" style="left:75.44px;top:545.85px;font-size:36.0px;color:#000;transform:scaleX(0.93);">C1</div>
<div class="t" style="left:339.43px;top:545.85px;font-size:36.0px;color:#000;transform:scaleX(0.93);">800</div>
<div class="t" style="left:505.43px;top:545.85px;font-size:36.0px;color:#000;transform:scaleX(0.93);">800</div>
<div class="t" style="left:690.53px;top:545.85px;font-size:36.0px;color:#000;transform:scaleX(0.93);">24</div>
<div class="t" style="left:75.44px;top:603.85px;font-size:36.0px;color:#000;transform:scaleX(0.93);">C2</div>
<div class="t" style="left:339.43px;top:603.85px;font-size:36.0px;color:#000;transform:scaleX(0.93);">700</div>
<div class="t" style="left:505.43px;top:603.85px;font-size:36.0px;color:#000;transform:scaleX(0.93);">700</div>
<div class="t" style="left:688.33px;top:603.85px;font-size:36.0px;color:#000;transform:scaleX(0.93);">21</div>
<div class="t" style="left:75.44px;top:661.85px;font-size:36.0px;color:#000;transform:scaleX(0.93);">G1</div>
<div class="t" style="left:339.43px;top:661.85px;font-size:36.0px;color:#000;transform:scaleX(0.93);">400</div>
<div class="t" style="left:505.43px;top:661.85px;font-size:36.0px;color:#000;transform:scaleX(0.93);">600</div>
<div class="t" style="left:690.53px;top:661.85px;font-size:36.0px;color:#000;transform:scaleX(0.93);">24</div>
<div class="t" style="left:75.44px;top:719.85px;font-size:36.0px;color:#000;transform:scaleX(0.93);">G2</div>
<div class="t" style="left:339.43px;top:719.85px;font-size:36.0px;color:#000;transform:scaleX(0.93);">500</div>
<div class="t" style="left:505.43px;top:719.85px;font-size:36.0px;color:#000;transform:scaleX(0.93);">800</div>
<div class="t" style="left:688.33px;top:719.85px;font-size:36.0px;color:#000;transform:scaleX(0.93);">21</div>
<div class="a" style="left:150px;top:976px;width:130px;height:14px;background:#ffffff;"></div>
<div class="a" style="left:2px;top:978px;width:165px;height:48px;background:#0a0a0a;border-top-right-radius:9px;"></div>
<div class="a" style="left:262px;top:978px;width:1519px;height:48px;background:#0a0a0a;border-top-left-radius:9px;"></div>
<div class="a" style="left:167px;top:976px;width:95px;height:44px;background:#ffffff;border-bottom-left-radius:8px;border-bottom-right-radius:8px;"></div>
<div class="a" style="left:180px;top:1013px;width:70px;height:3px;background:#1e7b45;"></div>
<div class="a" style="left:268px;top:989px;width:1px;height:27px;background:#5a5a5a;"></div>
<svg style="left:35px;top:992px" width="13" height="18" viewBox="0 0 13 18"><polyline points="10,2 3,8.5 10,15" fill="none" stroke="#b4b4b4" stroke-width="1.6"/></svg>
<svg style="left:84px;top:992px" width="13" height="18" viewBox="0 0 13 18"><polyline points="3,2 10,8.5 3,15" fill="none" stroke="#b4b4b4" stroke-width="1.6"/></svg>
<svg style="left:330px;top:990px" width="21" height="21" viewBox="0 0 21 21"><path d="M10.5 2 V19 M2 10.5 H19" stroke="#d6d6d6" stroke-width="1.7"/></svg>
<div class="a" style="left:1753px;top:421px;width:26px;height:559px;background:#171717;border-radius:13px;"></div>
<svg style="left:1759px;top:428px" width="14" height="12" viewBox="0 0 14 12"><path d="M1 11 L7 2 L13 11 Z" fill="#9c9c9c" stroke="#9c9c9c" stroke-width="1.5" stroke-linejoin="round"/></svg>
<div class="a" style="left:1760px;top:447px;width:12px;height:218px;background:#9e9e9e;border-radius:6px;"></div>
<svg style="left:1759px;top:962px" width="14" height="12" viewBox="0 0 14 12"><path d="M1 1 L7 10 L13 1 Z" fill="#9c9c9c" stroke="#9c9c9c" stroke-width="1.5" stroke-linejoin="round"/></svg>
<div class="a" style="left:1099px;top:988px;width:653px;height:26px;background:#171717;border-radius:13px;"></div>
<svg style="left:1105px;top:993px" width="14" height="16" viewBox="0 0 14 16"><path d="M12 1 L2 8 L12 15 Z" fill="#9c9c9c" stroke="#9c9c9c" stroke-width="1.5" stroke-linejoin="round"/></svg>
<div class="a" style="left:1125px;top:995px;width:541px;height:12px;background:#9e9e9e;border-radius:6px;"></div>
<svg style="left:1733px;top:993px" width="14" height="16" viewBox="0 0 14 16"><path d="M2 1 L12 8 L2 15 Z" fill="#9c9c9c" stroke="#9c9c9c" stroke-width="1.5" stroke-linejoin="round"/></svg>
<svg style="left:1072px;top:995px" width="6" height="16" viewBox="0 0 6 16"><rect x="0.5" y="0" width="4" height="4" fill="#d0d0d0"/><rect x="0.5" y="6" width="4" height="4" fill="#d0d0d0"/><rect x="0.5" y="12" width="4" height="4" fill="#d0d0d0"/></svg>
<div class="a" style="left:2px;top:1026px;width:1779px;height:1px;background:#3c3c3c;"></div>
<div class="a" style="left:2px;top:1027px;width:1779px;height:32px;background:#141414;border-bottom-left-radius:8px;border-bottom-right-radius:8px;"></div>
<svg style="left:111px;top:1033px" width="25" height="21" viewBox="0 0 25 21"><path d="M2.5 19.5 V2 H22.5 V9 M2.5 5.5 H22.5 M5.5 10 H11 M5.5 13.5 H10 M5.5 17 H10" fill="none" stroke="#f0f0f0" stroke-width="1.8"/><circle cx="17" cy="14" r="5.6" fill="#141414" stroke="#f0f0f0" stroke-width="1.8"/><circle cx="17" cy="14" r="2.7" fill="#f0f0f0"/></svg>
<svg style="left:158px;top:1032px" width="24" height="23" viewBox="0 0 24 23"><circle cx="9.5" cy="3.6" r="2.4" fill="none" stroke="#f0f0f0" stroke-width="1.8"/><path d="M2.5 7 C5 8.5 7 9 9.5 8.5 C12 9 14 8.5 16.5 7 M9.5 8.5 V13 L5.5 20.5 M9.5 13 L11.5 17" fill="none" stroke="#f0f0f0" stroke-width="2" stroke-linecap="round" stroke-linejoin="round"/><path d="M14.5 12.5 C14.5 10 19.5 10 19.5 12.5 C19.5 14.5 17 14.5 17 17" fill="none" stroke="#f0f0f0" stroke-width="1.7" stroke-linecap="round"/><circle cx="17" cy="20" r="1.1" fill="#f0f0f0"/></svg>
<svg style="left:1181px;top:1033px" width="25" height="23" viewBox="0 0 25 23"><path d="M10 15 H2 V2 H21 V9" fill="none" stroke="#e6e6e6" stroke-width="1.6"/><circle cx="15" cy="15" r="4" fill="none" stroke="#e6e6e6" stroke-width="2.4" stroke-dasharray="2 1.2"/><circle cx="15" cy="15" r="1.6" fill="#e6e6e6"/></svg>
<div class="a" style="left:1307px;top:1027px;width:60px;height:32px;background:#232323;"></div>
<svg style="left:1325px;top:1031px" width="23" height="23" viewBox="0 0 23 23"><rect x="1.5" y="1.5" width="19" height="19" fill="none" stroke="#f0f0f0" stroke-width="1.8"/><path d="M8 1.5 V20.5 M14.5 1.5 V20.5 M1.5 8 H20.5 M1.5 14.5 H20.5" stroke="#f0f0f0" stroke-width="1.6"/></svg>
<svg style="left:1384px;top:1031px" width="25" height="23" viewBox="0 0 25 23"><rect x="1.5" y="1.5" width="21" height="19.5" fill="none" stroke="#f0f0f0" stroke-width="1.8"/><rect x="5.5" y="5" width="13" height="12.5" fill="none" stroke="#f0f0f0" stroke-width="1.5"/><path d="M8.5 8.5 H15.5 M8.5 11.2 H15.5 M8.5 14 H15.5" stroke="#f0f0f0" stroke-width="1.2"/></svg>
<svg style="left:1444px;top:1031px" width="25" height="23" viewBox="0 0 25 23"><rect x="1.5" y="1.5" width="21" height="19.5" fill="none" stroke="#f0f0f0" stroke-width="1.8"/><path d="M8 1.5 V11 H16 V1.5" fill="none" stroke="#f0f0f0" stroke-width="1.6"/></svg>
<div class="a" style="left:1495px;top:1042px;width:11px;height:1.5px;background:#d0d0d0;"></div>
<div class="a" style="left:1515px;top:1042px;width:148px;height:1px;background:#9a9a9a;"></div>
<div class="a" style="left:1588px;top:1038px;width:1.5px;height:10px;background:#9a9a9a;"></div>
<div class="a" style="left:1600px;top:1034px;width:8px;height:18px;background:#c8c8c8;"></div>
<svg style="left:1670px;top:1035px" width="14" height="15" viewBox="0 0 14 15"><path d="M7 1.5 V13.5 M1 7.5 H13" stroke="#d0d0d0" stroke-width="1.4"/></svg>
<div class="t" style="left:85.55px;top:29.8px;font-size:20.0px;color:#f2f2f2;transform:scaleX(0.9462);">Book1.csv</div>
<div class="t" style="left:197.92px;top:32.1px;font-size:15.5px;color:#f2f2f2;transform:scaleX(0.84);">この</div>
<div class="t" style="left:230.83px;top:29.3px;font-size:20.0px;color:#f2f2f2;transform:scaleX(0.8692);">PC</div>
<div class="t" style="left:260.29px;top:31.15px;font-size:16.5px;color:#f2f2f2;transform:scaleX(1.006);">に保存済み</div>
<div class="t" style="left:736.3px;top:29.7px;font-size:18.0px;color:#a8a8a8;transform:scaleX(1.1229);">検索</div>
<div class="t" style="left:18.21px;top:88.15px;font-size:18.0px;color:#ffffff;transform:scaleX(0.7971);">ファイル</div>
<div class="t" style="left:101.9px;top:87.25px;font-size:19.5px;color:#ffffff;transform:scaleX(0.8712);font-weight:bold;">ホーム</div>
<div class="t" style="left:181.8px;top:89.5px;font-size:17.0px;color:#ffffff;transform:scaleX(1.1576);">挿入</div>
<div class="t" style="left:249.85px;top:87.9px;font-size:18.5px;color:#ffffff;transform:scaleX(0.8493);">ページ レイアウト</div>
<div class="t" style="left:410.6px;top:90.0px;font-size:16.0px;color:#ffffff;transform:scaleX(1.25);">数式</div>
<div class="t" style="left:477.96px;top:87.65px;font-size:18.0px;color:#ffffff;transform:scaleX(0.942);">データ</div>
<div class="t" style="left:554.3px;top:89.6px;font-size:17.5px;color:#ffffff;transform:scaleX(1.1429);">校閲</div>
<div class="t" style="left:620.15px;top:89.6px;font-size:16.5px;color:#ffffff;transform:scaleX(1.2531);">表示</div>
<div class="t" style="left:688.56px;top:89.2px;font-size:17.5px;color:#ffffff;transform:scaleX(1.1441);">開発</div>
<div class="t" style="left:756.9px;top:88.65px;font-size:18.0px;color:#ffffff;transform:scaleX(0.8782);">ヘルプ</div>
<div class="t" style="left:1565.45px;top:85.95px;font-size:19.5px;color:#ffffff;transform:scaleX(0.8167);">コメント</div>
<div class="t" style="left:1688.9px;top:87.95px;font-size:16.5px;color:#ffffff;transform:scaleX(1.1576);">共有</div>
<div class="t" style="left:34.8px;top:186.0px;font-size:15.0px;color:#ffffff;transform:scaleX(1.0424);">貼り付け</div>
<div class="t" style="left:38.95px;top:246.25px;font-size:16.5px;color:#ffffff;transform:scaleX(0.7739);">クリップボード</div>
<div class="t" style="left:190.6px;top:135.0px;font-size:17.0px;color:#ffffff;transform:scaleX(0.8463);">游ゴシック</div>
<div class="t" style="left:383.43px;top:132.75px;font-size:20.5px;color:#ffffff;transform:scaleX(0.97);">11</div>
<div class="t" style="left:273.99px;top:245.65px;font-size:18.5px;color:#ffffff;transform:scaleX(0.7029);">フォント</div>
<div class="t" style="left:518.44px;top:246.9px;font-size:16.0px;color:#ffffff;transform:scaleX(1.16);">配置</div>
<div class="t" style="left:665.5px;top:135.9px;font-size:16.0px;color:#ffffff;transform:scaleX(1.1194);">標準</div>
<div class="t" style="left:699.0px;top:247.0px;font-size:16.0px;color:#ffffff;transform:scaleX(1.125);">数値</div>
<div class="t" style="left:856.98px;top:134.4px;font-size:17.0px;color:#ffffff;transform:scaleX(1.0218);">条件付き書式</div>
<div class="t" style="left:857.1px;top:173.1px;font-size:17.0px;color:#ffffff;transform:scaleX(0.9);">テーブルとして書式設定</div>
<div class="t" style="left:857.26px;top:211.1px;font-size:19.0px;color:#ffffff;transform:scaleX(0.7424);">セルのスタイル</div>
<div class="t" style="left:909.97px;top:245.45px;font-size:17.5px;color:#ffffff;transform:scaleX(0.7657);">スタイル</div>
<div class="t" style="left:1116.8px;top:133.9px;font-size:18.0px;color:#ffffff;transform:scaleX(1.0114);">挿入</div>
<div class="t" style="left:1115.76px;top:172.6px;font-size:18.0px;color:#ffffff;transform:scaleX(1.0412);">削除</div>
<div class="t" style="left:1116.8px;top:213.1px;font-size:18.0px;color:#ffffff;transform:scaleX(0.9833);">書式</div>
<div class="t" style="left:1119.2px;top:243.95px;font-size:19.0px;color:#ffffff;transform:scaleX(0.8);">セル</div>
<div class="t" style="left:1257.2px;top:246.35px;font-size:17.5px;color:#ffffff;transform:scaleX(1.0086);">編集</div>
<div class="t" style="left:1376.29px;top:183.8px;font-size:17.5px;color:#ffffff;transform:scaleX(0.8563);">アド</div>
<div class="t" style="left:1376.34px;top:205.9px;font-size:18.0px;color:#ffffff;transform:scaleX(0.8303);">イン</div>
<div class="t" style="left:1363.52px;top:244.35px;font-size:18.5px;color:#ffffff;transform:scaleX(0.7417);">アドイン</div>
<div class="t" style="left:1457.42px;top:183.3px;font-size:17.5px;color:#ffffff;transform:scaleX(0.884);">データ</div>
<div class="t" style="left:1461.6px;top:207.9px;font-size:15.5px;color:#ffffff;transform:scaleX(1.125);">分析</div>
<div class="t" style="left:1567.55px;top:181.7px;font-size:21.0px;color:#ffffff;transform:scaleX(0.9242);">Launch</div>
<div class="t" style="left:1527.3px;top:245.7px;font-size:19.5px;color:#ffffff;transform:scaleX(1.0028);">Stock Connector</div>
<div class="t" style="left:199.51px;top:169.35px;font-size:21.0px;color:#d6d6d6;transform:scaleX(0.8923);font-weight:bold;">B</div>
<div class="t" style="left:239.8px;top:170.0px;font-size:22.5px;color:#d6d6d6;transform:scaleX(1.2375);font-style:italic;font-family:'Liberation Serif',serif;">I</div>
<div class="t" style="left:274.85px;top:170.0px;font-size:20.0px;color:#d6d6d6;transform:scaleX(1.15);">U</div>
<div class="t" style="left:338.0px;top:165.5px;font-size:28.5px;color:#d6d6d6;transform:scaleX(0.8947);">A</div>
<div class="t" style="left:380.0px;top:171.75px;font-size:23.0px;color:#d6d6d6;transform:scaleX(0.9);">A</div>
<div class="t" style="left:325.4px;top:205.9px;font-size:24.0px;color:#d6d6d6;transform:scaleX(0.85);">A</div>
<div class="t" style="left:23.51px;top:288.25px;font-size:15.5px;color:#ffffff;transform:scaleX(1.1435);">自動保存</div>
<div class="t" style="left:139.82px;top:286.5px;font-size:18.0px;color:#ffffff;transform:scaleX(0.7818);">オフ</div>
<div class="t" style="left:224.5px;top:288.0px;font-size:16.0px;color:#ffffff;transform:scaleX(1.0638);">上書き保存</div>
<div class="t" style="left:365.35px;top:288.0px;font-size:16.0px;color:#ffffff;transform:scaleX(1.0484);">元に戻す</div>
<div class="t" style="left:501.7px;top:287.6px;font-size:16.0px;color:#6f6f6f;transform:scaleX(0.9048);">やり直し</div>
<div class="t" style="left:628.4px;top:289.2px;font-size:14.5px;color:#ffffff;transform:scaleX(1.1219);">記号と特殊文字</div>
<div class="t" style="left:801.99px;top:287.75px;font-size:15.5px;color:#ffffff;transform:scaleX(1.0057);">セルを結合して中央揃え</div>
<div class="t" style="left:1030.51px;top:286.25px;font-size:18.5px;color:#ffffff;transform:scaleX(0.748);">リンク</div>
<div class="t" style="left:1141.0px;top:287.25px;font-size:16.5px;color:#ffffff;transform:scaleX(1.0213);">下付き</div>
<div class="t" style="left:1116.8px;top:289.0px;font-size:18.0px;color:#d6d6d6;transform:scaleX(0.95);font-weight:bold;">x</div>
<div class="t" style="left:1127.8px;top:298.65px;font-size:12.5px;color:#3a9ee6;transform:scaleX(0.7571);font-weight:bold;">2</div>
<div class="t" style="left:20.09px;top:344.45px;font-size:25.0px;color:#ffffff;transform:scaleX(0.9069);">D5</div>
<div class="t" style="left:330.77px;top:343.15px;font-size:23.5px;color:#ffffff;transform:scaleX(0.925);">21</div>
<div class="t" style="left:276.2px;top:337.9px;font-size:26.5px;color:#e6e6e6;transform:scaleX(1.1368);font-style:italic;font-family:'Liberation Serif',serif;">fx</div>
<div class="t" style="left:181.55px;top:987.75px;font-size:21.0px;color:#262626;transform:scaleX(1.0754);">Book1</div>
<div class="t" style="left:13.0px;top:1035.55px;font-size:16.0px;color:#ffffff;transform:scaleX(1.1194);">準備完了</div>
<div class="t" style="left:184.51px;top:1034.55px;font-size:17.0px;color:#ffffff;transform:scaleX(0.7964);">アクセシビリティ:</div>
<div class="t" style="left:302.8px;top:1035.55px;font-size:16.0px;color:#ffffff;transform:scaleX(1.1031);">利用不可</div>
<div class="t" style="left:1208.4px;top:1036.0px;font-size:16.0px;color:#ffffff;transform:scaleX(1.1222);">表示設定</div>
<div class="t" style="left:1700.75px;top:1034.0px;font-size:21.5px;color:#ffffff;transform:scaleX(0.9547);">160%</div>
<div class="t" style="left:728.47px;top:167.8px;font-size:29.0px;color:#d6d6d6;transform:scaleX(0.9333);">%</div>
<div class="a" style="left:0;top:0;width:1783px;height:1061px;border:2px solid #868686;border-radius:9px;"></div>
</body></html>
